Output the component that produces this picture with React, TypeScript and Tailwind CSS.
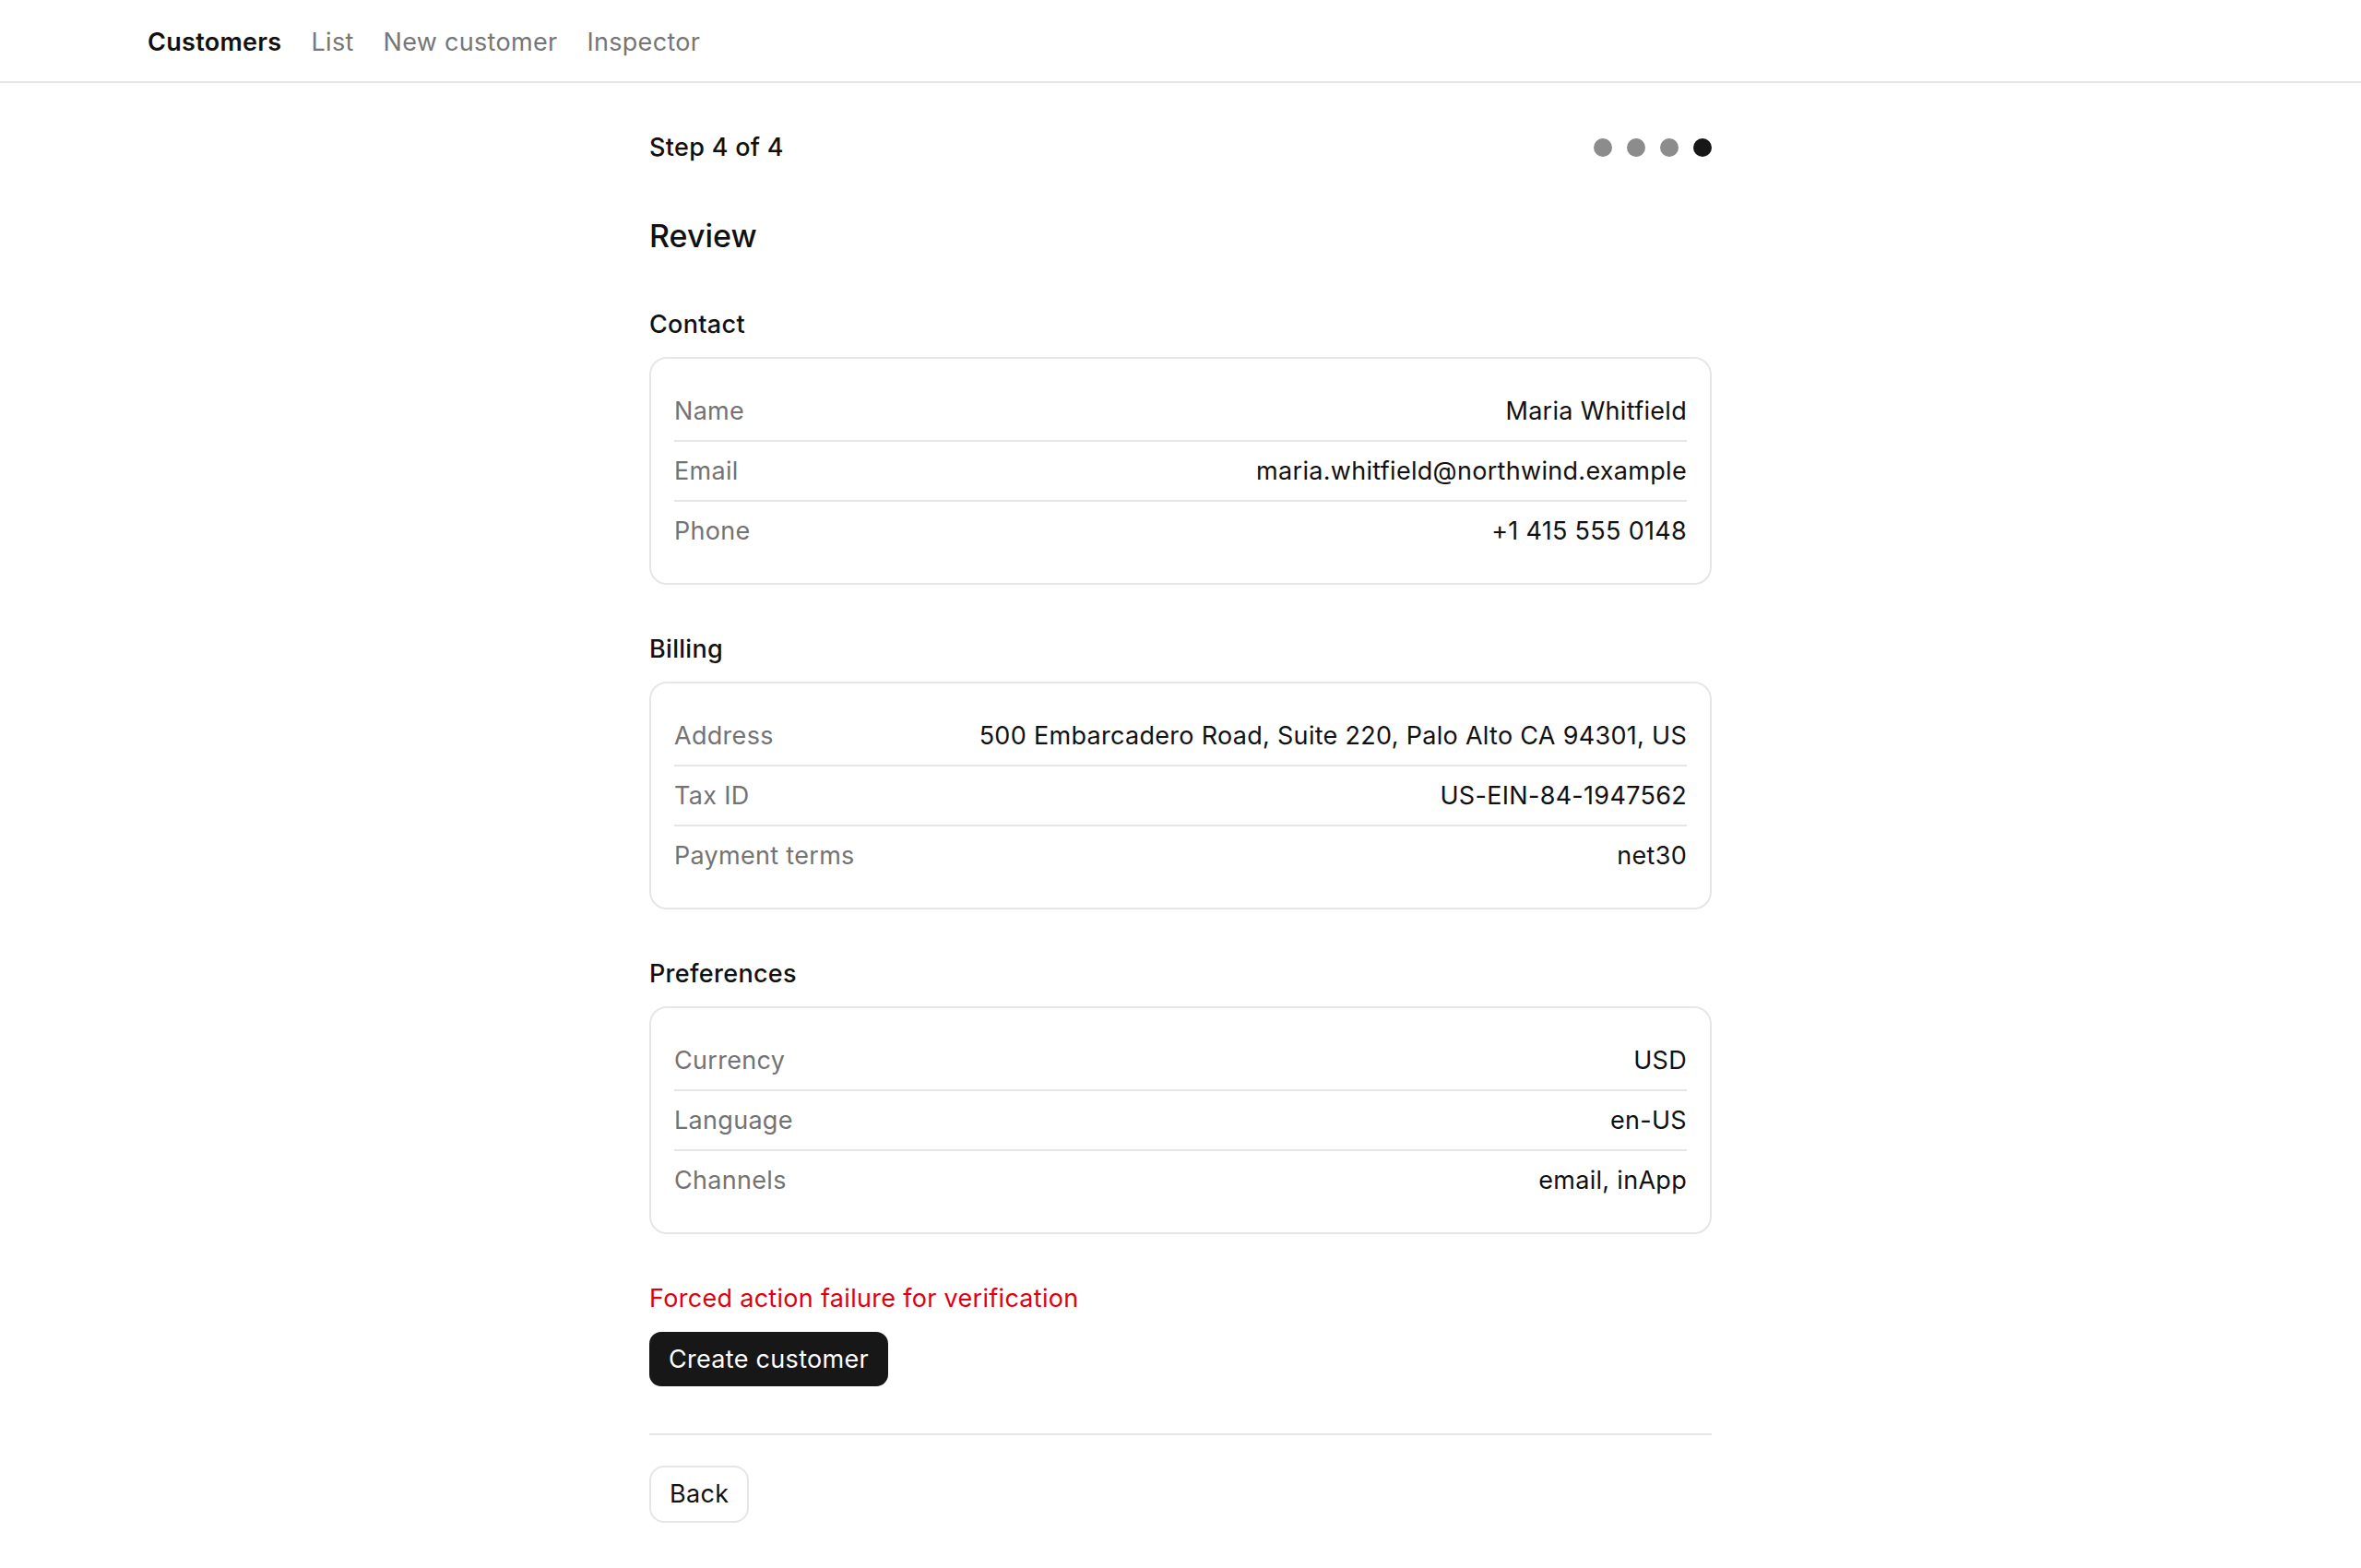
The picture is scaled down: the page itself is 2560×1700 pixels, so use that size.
const sections = [
  {
    title: "Contact",
    rows: [
      { label: "Name", value: "Maria Whitfield" },
      { label: "Email", value: "maria.whitfield@northwind.example" },
      { label: "Phone", value: "+1 415 555 0148" },
    ],
  },
  {
    title: "Billing",
    rows: [
      { label: "Address", value: "500 Embarcadero Road, Suite 220, Palo Alto CA 94301, US" },
      { label: "Tax ID", value: "US-EIN-84-1947562" },
      { label: "Payment terms", value: "net30" },
    ],
  },
  {
    title: "Preferences",
    rows: [
      { label: "Currency", value: "USD" },
      { label: "Language", value: "en-US" },
      { label: "Channels", value: "email, inApp" },
    ],
  },
];

const navItems = ["List", "New customer", "Inspector"];

function ReviewCard({ title, rows }: { title: string; rows: { label: string; value: string }[] }) {
  return (
    <section>
      <h3 className="pt-[2px] text-[27px] leading-[38px] font-medium text-[#111]">{title}</h3>
      <div className="mt-[16px] rounded-[19px] border-2 border-[#e6e6e6] px-[25px] py-[25px]">
        {rows.map((row, i) => (
          <div
            key={row.label}
            className={
              "flex h-[63px] items-center justify-between gap-8 " +
              (i > 0 ? "box-content border-t-2 border-[#e6e6e6]" : "")
            }
          >
            <span className="text-[#737373]">{row.label}</span>
            <span className="text-right text-[#111]">{row.value}</span>
          </div>
        ))}
      </div>
    </section>
  );
}

export default function App() {
  const step = 4;

  return (
    <div className="min-h-screen bg-white font-['Inter','Liberation_Sans',sans-serif] text-[27px] leading-[38px] tracking-[0.3px] text-[#111]">
      <header className="flex h-[90px] items-center gap-[32px] border-b-2 border-[#e6e6e6] pt-[3px] pl-[160px]">
        <span className="font-semibold text-[#111]">Customers</span>
        {navItems.map((item) => (
          <a key={item} className="text-[#767676]">
            {item}
          </a>
        ))}
      </header>

      <main className="mx-auto max-w-[1152px] pt-[51px] pb-[50px]">
        <div className="flex items-center justify-between">
          <span className="font-medium">Step {step} of 4</span>
          <div className="flex gap-[16px]">
            {[1, 2, 3, 4].map((n) => (
              <span
                key={n}
                className={
                  "h-[20px] w-[20px] rounded-full " + (n === step ? "bg-[#171717]" : "bg-[#8c8c8c]")
                }
              />
            ))}
          </div>
        </div>

        <h2 className="mt-[55px] text-[34px] leading-[44px] font-medium tracking-normal">Review</h2>

        <div className="mt-[53px] flex flex-col gap-[49px]">
          {sections.map((s) => (
            <ReviewCard key={s.title} title={s.title} rows={s.rows} />
          ))}

          <div>
            <p className="pt-[2px] text-[#e00012]">Forced action failure for verification</p>
            <button className="mt-[17px] flex h-[59px] items-center rounded-[13px] bg-[#171717] px-[21px] text-white">
              Create customer
            </button>
          </div>
        </div>

        <div className="mt-[51px] border-t-2 border-[#e6e6e6] pt-[33px]">
          <button className="flex h-[62px] items-center rounded-[16px] border-2 border-[#e6e6e6] px-[20px] text-[#111]">
            Back
          </button>
        </div>
      </main>
    </div>
  );
}
